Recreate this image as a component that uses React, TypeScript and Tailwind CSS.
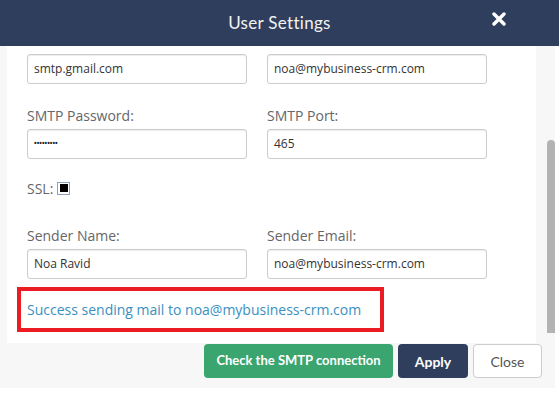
import React from "react";

const Field = ({ label, value, dots }: { label?: string; value: string; dots?: boolean }) => (
  <div className="flex flex-col w-[220px]">
    {label && (
      <label className="text-[14px] leading-[20px] text-[#666] mb-[3px]">{label}</label>
    )}
    <div className="h-[30px] border border-[#ccc] rounded-[3px] bg-white shadow-[inset_0_1px_1px_rgba(0,0,0,0.075)] flex items-center px-[6px] text-[12px] text-[#333]">
      {dots ? <span className="text-[7px] text-[#222] font-bold">{value}</span> : value}
    </div>
  </div>
);

export default function App() {
  return (
    <div className="w-[559px] h-[394px] bg-white overflow-hidden font-['Open_Sans',sans-serif]">
      {/* Header */}
      <div className="h-[46px] bg-[#2f3e5c] relative flex items-center justify-center">
        <span className="text-[17px] text-[#f2f2f2] font-['Lato',sans-serif] tracking-[0.3px]">User Settings</span>
        <svg
          viewBox="0 0 14 14"
          className="absolute left-[492px] top-[12px] w-[14px] h-[14px]"
          stroke="white"
          strokeWidth={3.4}
          strokeLinecap="round"
        >
          <path d="M2 2L12 12M12 2L2 12" />
        </svg>
      </div>

      {/* Body */}
      <div className="flex h-[297px]">
        <div className="w-[7px] bg-[#f7f7f7]" />
        <div className="w-[529px] bg-white pl-[20px]">
          <div className="flex gap-[20px] mt-[8px]">
            <Field value="smtp.gmail.com" />
            <Field value="noa@mybusiness-crm.com" />
          </div>
          <div className="flex gap-[20px] mt-[22px]">
            <Field label="SMTP Password:" value="•••••••••" dots />
            <Field label="SMTP Port:" value="465" />
          </div>
          <div className="flex items-center mt-[19px] h-[20px] text-[14px] text-[#666]">
            SSL:
            <span className="ml-[4px] w-[13px] h-[13px] border border-[#8da2c0] bg-white flex items-center justify-center">
              <span className="w-[8px] h-[8px] bg-black" />
            </span>
          </div>
          <div className="flex gap-[20px] mt-[28px]">
            <Field label="Sender Name:" value="Noa Ravid" />
            <Field label="Sender Email:" value="noa@mybusiness-crm.com" />
          </div>
          <div className="ml-[-10px] mt-[8px] w-[367px] h-[45px] border-[4px] border-[#ec1c24] flex items-center pl-[6px] text-[14px] text-[#3a8fbf]">
            Success sending mail to noa@mybusiness-crm.com
          </div>
        </div>
        <div className="w-[19px] bg-[#f7f7f7] flex justify-end">
          <div className="w-[8px] h-[193px] mt-[94px] bg-[#b3b3b3] rounded-t-[4px]" />
        </div>
        <div className="w-[4px] bg-white" />
      </div>

      {/* Footer */}
      <div className="w-[555px] h-[45px] bg-[#f7f7f7] flex justify-end items-start pt-[1px] pr-[13px] gap-[5px] font-['Lato',sans-serif]">
        <button className="h-[34px] w-[189px] rounded-[4px] bg-[#3aa56e] text-white text-[13px] font-bold">
          Check the SMTP connection
        </button>
        <button className="h-[34px] w-[70px] rounded-[4px] bg-[#2f3e5c] text-white text-[14px] font-bold">
          Apply
        </button>
        <button className="h-[34px] w-[69px] rounded-[4px] bg-white border border-[#ccc] text-[#555] text-[14px]">
          Close
        </button>
      </div>
    </div>
  );
}
